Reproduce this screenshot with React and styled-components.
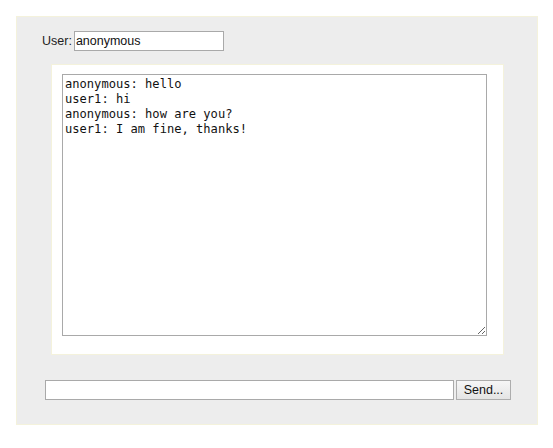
import React from "react";
import styled, { createGlobalStyle } from "styled-components";

const Global = createGlobalStyle`
  html, body { background: #ffffff; }
  body { margin: 8px; font-family: "Liberation Sans", Arial, sans-serif; }
`;

const Panel = styled.div`
  margin: 8px;
  width: 520px;
  box-sizing: content-box;
  background: #ededed;
  border: 1px solid #f4f2dc;
  padding: 14px 0 24px 0;
  display: flex;
  flex-direction: column;
`;

const UserRow = styled.div`
  display: flex;
  align-items: center;
  height: 20px;
  margin-left: 25px;
  gap: 2px;
`;

const Label = styled.label`
  font-size: 12.5px;
  color: #222;
`;

const TextInput = styled.input`
  box-sizing: border-box;
  width: ${(p) => p.$w}px;
  height: 20px;
  margin: 0;
  padding: 0 1px;
  border: 1px solid #a9a9a9;
  background: #fff;
  font-family: "Liberation Sans", Arial, sans-serif;
  font-size: 12.5px;
  color: #111;
  outline: none;
`;

const ChatBox = styled.div`
  box-sizing: border-box;
  margin: 13px 0 0 34px;
  width: 453px;
  height: 291px;
  background: #fff;
  border: 1px solid #f4f2dc;
  padding: 9px 0 0 10px;
`;

const Log = styled.textarea`
  display: block;
  box-sizing: border-box;
  width: 425px;
  height: 262px;
  margin: 0;
  padding: 2px 2px;
  border: 1px solid #a9a9a9;
  background: #fff;
  font-family: "DejaVu Sans Mono", "Liberation Mono", monospace;
  font-size: 12.1px;
  line-height: 15px;
  color: #111;
  resize: both;
  outline: none;
`;

const SendRow = styled.div`
  display: flex;
  align-items: center;
  gap: 2px;
  margin: 25px 0 0 28px;
`;

const Button = styled.button`
  box-sizing: border-box;
  width: 55px;
  height: 20px;
  margin: 0;
  padding: 0;
  border: 1px solid #adadad;
  background: linear-gradient(#f6f6f6, #e4e4e4);
  font-family: "Liberation Sans", Arial, sans-serif;
  font-size: 12.5px;
  color: #111;
`;

const log = `anonymous: hello
user1: hi
anonymous: how are you?
user1: I am fine, thanks!`;

export default function App() {
  return (
    <>
      <Global />
      <Panel>
        <UserRow>
          <Label>User:</Label>
          <TextInput $w={150} defaultValue="anonymous" />
        </UserRow>
        <ChatBox>
          <Log readOnly defaultValue={log} />
        </ChatBox>
        <SendRow>
          <TextInput $w={409} defaultValue="" />
          <Button>Send...</Button>
        </SendRow>
      </Panel>
    </>
  );
}
